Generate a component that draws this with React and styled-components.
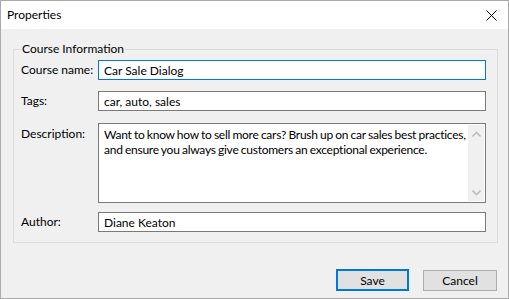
import React from 'react';
import styled, { createGlobalStyle } from 'styled-components';

const GlobalStyle = createGlobalStyle`
  html, body {
    margin: 0;
    padding: 0;
    background: #ffffff;
  }
  * {
    box-sizing: border-box;
  }
`;

const Window = styled.div`
  width: 509px;
  height: 299px;
  border: 1px solid #aaaaaa;
  display: flex;
  flex-direction: column;
  font-family: 'Segoe UI', Lato, 'Noto Sans', sans-serif;
  font-size: 12px;
  color: #000000;
  background: #f0f0f0;
  overflow: hidden;
`;

const TitleBar = styled.div`
  height: 28px;
  flex-shrink: 0;
  display: flex;
  align-items: center;
  justify-content: space-between;
  padding: 0 6px 0 6px;
  background: #ffffff;
`;

const Title = styled.span`
  font-size: 12px;
  line-height: 16px;
`;

const CloseButton = styled.button`
  width: 20px;
  height: 20px;
  padding: 0;
  margin-right: 1px;
  border: none;
  background: transparent;
  display: flex;
  align-items: center;
  justify-content: center;
`;

const Body = styled.div`
  flex: 1;
  display: flex;
  flex-direction: column;
  padding: 12px 10px 0 12px;
`;

const Group = styled.fieldset`
  margin: 0;
  padding: 3px 11px 10px 7px;
  border: 1px solid #dcdcdc;
  display: flex;
  flex-direction: column;
`;

const Legend = styled.legend`
  padding: 0 1px;
  line-height: 16px;
`;

const Row = styled.div`
  display: flex;
  align-items: ${props => (props.$top ? 'flex-start' : 'center')};
  margin-top: ${props => props.$gap || 0}px;
`;

const Label = styled.label`
  width: 77px;
  flex-shrink: 0;
  white-space: nowrap;
  line-height: 16px;
  padding-top: ${props => (props.$top ? '3px' : '0')};
`;

const Input = styled.input`
  flex: 1;
  height: 20px;
  margin: 0;
  padding: 0 5px;
  border: 1px solid ${props => (props.$focused ? '#0078d7' : '#7a7a7a')};
  background: #ffffff;
  font-family: inherit;
  font-size: 12px;
  color: #000000;
  outline: none;
`;

const TextBox = styled.div`
  flex: 1;
  height: 80px;
  display: flex;
  border: 1px solid #7a7a7a;
  background: #ffffff;
`;

const TextArea = styled.textarea`
  flex: 1;
  min-width: 0;
  margin: 0;
  padding: 3px 0 3px 5px;
  border: none;
  resize: none;
  outline: none;
  overflow: hidden;
  font-family: inherit;
  font-size: 12px;
  letter-spacing: -0.25px;
  word-spacing: -0.5px;
  line-height: 15px;
  color: #000000;
  background: transparent;
`;

const ScrollTrack = styled.div`
  width: 17px;
  flex-shrink: 0;
  display: flex;
  flex-direction: column;
  justify-content: space-between;
  background: #f0f0f0;
  border: 1px solid #ffffff;
  border-left: none;
`;

const ScrollArrow = styled.div`
  height: 17px;
  display: flex;
  align-items: center;
  justify-content: center;
`;

const Footer = styled.div`
  display: flex;
  justify-content: flex-end;
  gap: 14px;
  padding: 26px 1px 0 0;
`;

const Button = styled.button`
  width: ${props => (props.$primary ? '73px' : '74px')};
  height: ${props => (props.$primary ? '22px' : '21px')};
  margin-top: ${props => (props.$primary ? '0' : '1px')};
  padding: 0;
  border: ${props => (props.$primary ? '2px solid #0078d7' : '1px solid #adadad')};
  background: #e1e1e1;
  font-family: inherit;
  font-size: 12px;
  color: #000000;
`;

const Chevron = ({ up }) => (
  <svg width="9" height="6" viewBox="0 0 9 6">
    <path
      d={up ? 'M0.5 5.5 L4.5 1.5 L8.5 5.5' : 'M0.5 0.5 L4.5 4.5 L8.5 0.5'}
      fill="none"
      stroke="#bfbfbf"
      strokeWidth="1.6"
    />
  </svg>
);

const App = () => {
  return (
    <>
      <GlobalStyle />
      <Window>
        <TitleBar>
          <Title>Properties</Title>
          <CloseButton aria-label="Close">
            <svg width="11" height="11" viewBox="0 0 11 11">
              <path d="M0.5 0.5 L10.5 10.5 M10.5 0.5 L0.5 10.5" stroke="#000" strokeWidth="1" />
            </svg>
          </CloseButton>
        </TitleBar>
        <Body>
          <Group>
            <Legend>Course Information</Legend>
            <Row>
              <Label>Course name:</Label>
              <Input $focused defaultValue="Car Sale Dialog" />
            </Row>
            <Row $gap={11}>
              <Label>Tags:</Label>
              <Input defaultValue="car, auto, sales" />
            </Row>
            <Row $gap={12} $top>
              <Label $top>Description:</Label>
              <TextBox>
                <TextArea defaultValue="Want to know how to sell more cars? Brush up on car sales best practices, and ensure you always give customers an exceptional experience." />
                <ScrollTrack>
                  <ScrollArrow><Chevron up /></ScrollArrow>
                  <ScrollArrow><Chevron /></ScrollArrow>
                </ScrollTrack>
              </TextBox>
            </Row>
            <Row $gap={9}>
              <Label>Author:</Label>
              <Input defaultValue="Diane Keaton" />
            </Row>
          </Group>
          <Footer>
            <Button $primary>Save</Button>
            <Button>Cancel</Button>
          </Footer>
        </Body>
      </Window>
    </>
  );
};

export default App;
